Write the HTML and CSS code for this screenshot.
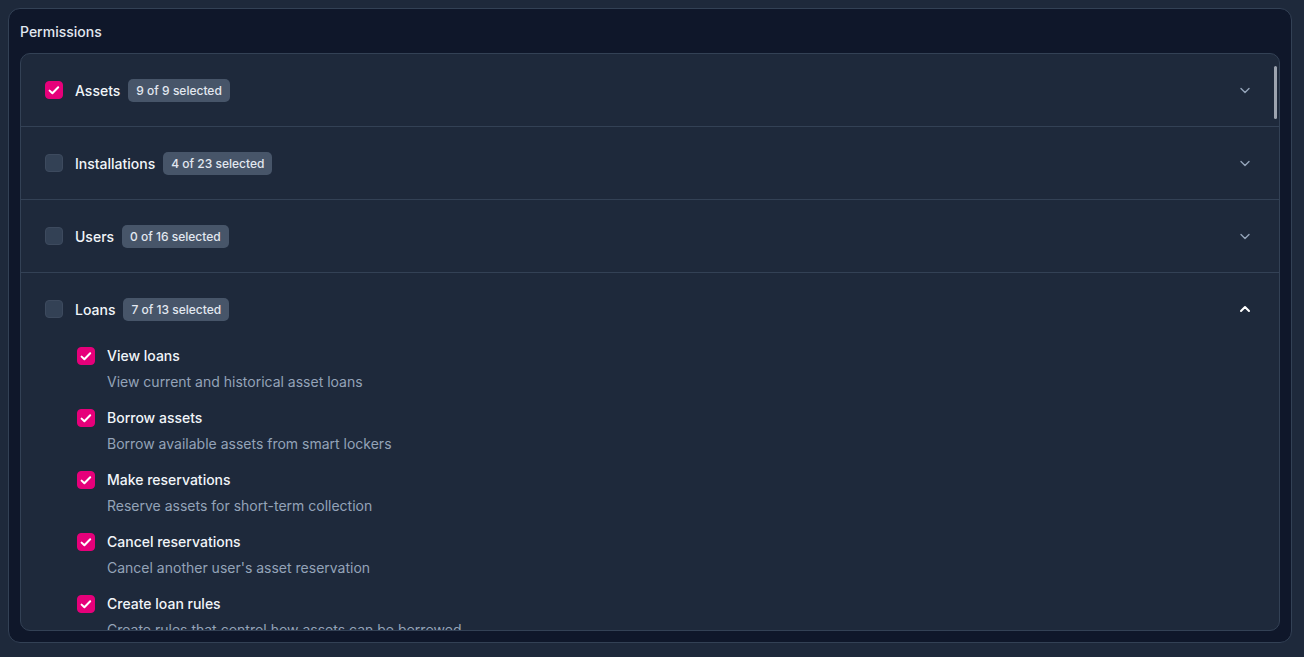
FILE: index.html
```html
<!DOCTYPE html>
<html lang="en">
<head>
    <meta charset="UTF-8">
    <meta name="viewport" content="width=device-width, initial-scale=1.0">
    <title>Permissions</title>
    <link rel="stylesheet" href="styles.css">
</head>
<body>
    <div class="panel">
        <h2 class="panel-title">Permissions</h2>
        <div class="groups">
            <div class="scroll-thumb"></div>

            <div class="group">
                <div class="group-head">
                    <span class="check checked"><svg viewBox="0 0 18 18"><path d="M4.6 9.6l2.8 2.7L13.2 6.3"/></svg></span>
                    <span class="group-name">Assets</span>
                    <span class="badge">9 of 9 selected</span>
                    <svg class="chevron" viewBox="0 0 16 16"><path d="M4 6.5l4 4 4-4"/></svg>
                </div>
            </div>

            <div class="group">
                <div class="group-head">
                    <span class="check"></span>
                    <span class="group-name">Installations</span>
                    <span class="badge">4 of 23 selected</span>
                    <svg class="chevron" viewBox="0 0 16 16"><path d="M4 6.5l4 4 4-4"/></svg>
                </div>
            </div>

            <div class="group">
                <div class="group-head">
                    <span class="check"></span>
                    <span class="group-name">Users</span>
                    <span class="badge">0 of 16 selected</span>
                    <svg class="chevron" viewBox="0 0 16 16"><path d="M4 6.5l4 4 4-4"/></svg>
                </div>
            </div>

            <div class="group open">
                <div class="group-head">
                    <span class="check"></span>
                    <span class="group-name">Loans</span>
                    <span class="badge">7 of 13 selected</span>
                    <svg class="chevron" viewBox="0 0 16 16"><path d="M4 10l4-4 4 4"/></svg>
                </div>
                <ul class="perm-list">
                    <li class="perm">
                        <span class="check checked"><svg viewBox="0 0 18 18"><path d="M4.6 9.6l2.8 2.7L13.2 6.3"/></svg></span>
                        <div>
                            <div class="perm-name">View loans</div>
                            <div class="perm-desc">View current and historical asset loans</div>
                        </div>
                    </li>
                    <li class="perm">
                        <span class="check checked"><svg viewBox="0 0 18 18"><path d="M4.6 9.6l2.8 2.7L13.2 6.3"/></svg></span>
                        <div>
                            <div class="perm-name">Borrow assets</div>
                            <div class="perm-desc">Borrow available assets from smart lockers</div>
                        </div>
                    </li>
                    <li class="perm">
                        <span class="check checked"><svg viewBox="0 0 18 18"><path d="M4.6 9.6l2.8 2.7L13.2 6.3"/></svg></span>
                        <div>
                            <div class="perm-name">Make reservations</div>
                            <div class="perm-desc">Reserve assets for short-term collection</div>
                        </div>
                    </li>
                    <li class="perm">
                        <span class="check checked"><svg viewBox="0 0 18 18"><path d="M4.6 9.6l2.8 2.7L13.2 6.3"/></svg></span>
                        <div>
                            <div class="perm-name">Cancel reservations</div>
                            <div class="perm-desc">Cancel another user's asset reservation</div>
                        </div>
                    </li>
                    <li class="perm">
                        <span class="check checked"><svg viewBox="0 0 18 18"><path d="M4.6 9.6l2.8 2.7L13.2 6.3"/></svg></span>
                        <div>
                            <div class="perm-name">Create loan rules</div>
                            <div class="perm-desc">Create rules that control how assets can be borrowed</div>
                        </div>
                    </li>
                    <li class="perm">
                        <span class="check"></span>
                        <div>
                            <div class="perm-name">Edit loan rules</div>
                            <div class="perm-desc">Change existing loan rules</div>
                        </div>
                    </li>
                </ul>
            </div>
        </div>
    </div>
</body>
</html>
```

FILE: styles.css
```css
body {
    margin: 8px;
    background-color: #1e293b;
    font-family: Inter, "Noto Sans", sans-serif;
    color: #f1f5f9;
}
.panel {
    width: 1284px;
    box-sizing: border-box;
    background: #0f172a;
    border: 1px solid #334155;
    border-radius: 12px;
    padding: 13px 11px 11px;
}
.panel-title {
    margin: 0 0 11px;
    font-size: 14px;
    line-height: 20px;
    font-weight: 500;
    color: #e2e8f0;
}
.groups {
    position: relative;
    height: 578px;
    box-sizing: border-box;
    overflow: hidden;
    background: #1e293b;
    border: 1px solid #334155;
    border-radius: 10px;
}
.scroll-thumb {
    position: absolute;
    top: 12px;
    right: 2px;
    width: 3px;
    height: 53px;
    border-radius: 2px;
    background: #9ca3af;
}
.group {
    border-bottom: 1px solid #334155;
}
.group-head {
    display: flex;
    align-items: center;
    height: 72px;
    padding: 0 26px 0 24px;
}
.check {
    flex: none;
    display: flex;
    align-items: center;
    justify-content: center;
    width: 18px;
    height: 18px;
    box-sizing: border-box;
    border-radius: 4px;
    background: #334155;
    border: 1px solid #3d4a5e;
}
.check.checked {
    background: #e6007a;
    border-color: #e6007a;
}
.check svg {
    flex: none;
    width: 18px;
    height: 18px;
    fill: none;
    stroke: #fff;
    stroke-width: 2;
    stroke-linecap: round;
    stroke-linejoin: round;
}
.group-name {
    margin-left: 12px;
    font-size: 14px;
    font-weight: 500;
    color: #f1f5f9;
}
.badge {
    margin-left: 8px;
    padding: 0 8px;
    height: 23px;
    line-height: 23px;
    border-radius: 5px;
    background: #475569;
    font-size: 12px;
    font-weight: 500;
    color: #e2e8f0;
}
.chevron {
    margin-left: auto;
    width: 16px;
    height: 16px;
    fill: none;
    stroke: #94a3b8;
    stroke-width: 1.4;
    stroke-linecap: round;
    stroke-linejoin: round;
}
.open .chevron {
    stroke: #fff;
    stroke-width: 2;
}
.perm-list {
    list-style: none;
    margin: 0;
    padding: 1px 24px 16px 56px;
}
.perm {
    display: flex;
    gap: 12px;
    margin-bottom: 16px;
}
.perm .check {
    margin-top: 1px;
}
.perm-name {
    font-size: 14px;
    line-height: 20px;
    font-weight: 500;
    color: #f1f5f9;
}
.perm-desc {
    margin-top: 6px;
    font-size: 14px;
    line-height: 20px;
    color: #94a3b8;
}
```
